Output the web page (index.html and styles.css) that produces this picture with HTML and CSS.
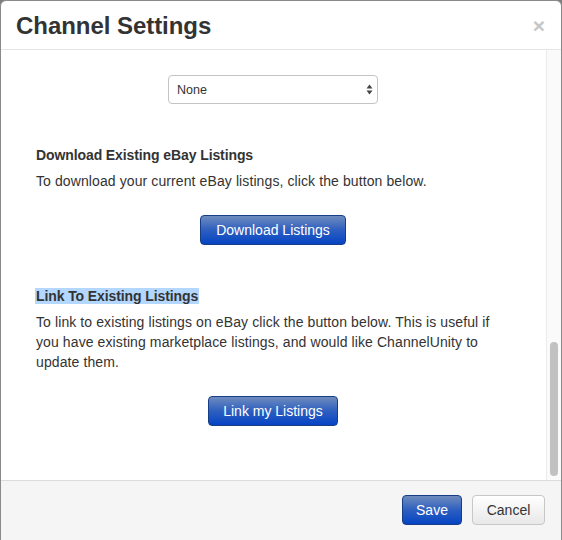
FILE: index.html
```html
<!DOCTYPE html>
<html>
<head>
<meta charset="utf-8">
<link rel="stylesheet" href="styles.css">
</head>
<body>
<div class="modal">
  <div class="modal-header">
    <h3 class="title">Channel Settings</h3>
    <span class="close">&times;</span>
  </div>
  <div class="modal-body">
    <div class="content">
      <div class="select">
        <span>None</span>
        <svg width="7" height="11" viewBox="0 0 7 11"><path d="M3.5 0.5 L6.5 4.5 L0.5 4.5 Z M3.5 10.5 L6.5 6.5 L0.5 6.5 Z" fill="#444"/></svg>
      </div>
      <h4 class="heading first">Download Existing eBay Listings</h4>
      <p class="text">To download your current eBay listings, click the button below.</p>
      <div class="actions"><span class="btn btn-primary btn-download">Download Listings</span></div>
      <h4 class="heading"><span class="hl">Link To Existing Listings</span></h4>
      <p class="text">To link to existing listings on eBay click the button below. This is useful if you have existing marketplace listings, and would like ChannelUnity to update them.</p>
      <div class="actions"><span class="btn btn-primary btn-link">Link my Listings</span></div>
    </div>
    <div class="scrollbar"><div class="thumb"></div></div>
  </div>
  <div class="modal-footer">
    <span class="btn btn-primary btn-save">Save</span>
    <span class="btn btn-default btn-cancel">Cancel</span>
  </div>
</div>
</body>
</html>
```

FILE: styles.css
```css
html, body {
  margin: 0;
  padding: 0;
  background: #7d7d7d;
  font-family: "Liberation Sans", Arial, Helvetica, sans-serif;
  color: #333;
}
.modal {
  width: 562px;
  height: 560px;
  box-sizing: border-box;
  background: #fff;
  border: 1px solid #8a8a8a;
  border-radius: 6px 6px 0 0;
  overflow: hidden;
  display: flex;
  flex-direction: column;
}
.modal-header {
  height: 48px;
  border-bottom: 1px solid #e5e5e5;
  display: flex;
  align-items: center;
  justify-content: space-between;
  padding: 0 15px 0 15px;
  flex-shrink: 0;
}
.title {
  margin: 0;
  font-size: 24px;
  font-weight: bold;
  color: #333;
  line-height: 30px;
  padding-top: 2px;
  letter-spacing: -0.05px;
}
.close {
  font-size: 21px;
  font-weight: bold;
  color: #c6c6c6;
  line-height: 20px;
  padding-top: 2px;
  margin-right: 1px;
}
.modal-body {
  height: 430px;
  display: flex;
  flex-shrink: 0;
}
.content {
  flex: 1;
  padding: 25px 36px 0 35px;
  display: flex;
  flex-direction: column;
}
.select {
  align-self: center;
  width: 210px;
  height: 29px;
  box-sizing: border-box;
  border: 1px solid #c4c4c4;
  border-radius: 4px;
  display: flex;
  align-items: center;
  justify-content: space-between;
  padding: 0 4px 0 8px;
  font-size: 12.5px;
  color: #333;
}
.heading {
  margin: 41px 0 0 0;
  font-size: 14px;
  font-weight: bold;
  line-height: 20px;
  color: #333;
  letter-spacing: -0.1px;
}
.hl { background: #b3d7fe; padding: 0 1px; margin-left: -1px; }
.text {
  margin: 6px 0 0 0;
  font-size: 14px;
  line-height: 20px;
  color: #333;
  letter-spacing: 0.1px;
}
.actions {
  margin-top: 24px;
  display: flex;
  justify-content: center;
}
.btn {
  display: inline-flex;
  align-items: center;
  justify-content: center;
  height: 30px;
  box-sizing: border-box;
  border-radius: 4px;
  font-size: 14px;
}
.btn-primary {
  color: #fff;
  background: linear-gradient(to bottom, #6f8bbd 0%, #2d5fc0 50%, #0644c4 100%);
  border: 1px solid #173d86;
}
.btn-default {
  color: #333;
  background: linear-gradient(to bottom, #ffffff, #e8e8e8);
  border: 1px solid #c8c8c8;
}
.btn-download { width: 146px; }
.btn-link { width: 130px; }
.scrollbar {
  width: 14px;
  border-left: 1px solid #ececec;
  background: #fafafa;
  display: flex;
  flex-direction: column;
  align-items: center;
}
.thumb {
  width: 8px;
  height: 134px;
  margin-top: 292px;
  border-radius: 4px;
  background: #c1c1c1;
}
.modal-footer {
  flex: 1;
  border-top: 1px solid #dcdcdc;
  background: #f5f5f5;
  display: flex;
  justify-content: flex-end;
  align-items: flex-start;
  gap: 10px;
  padding: 14px 16px 0 0;
}
.btn-save { width: 60px; }
.btn-cancel { width: 73px; }
```
